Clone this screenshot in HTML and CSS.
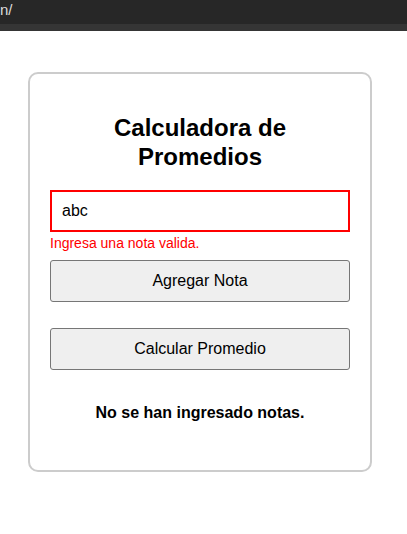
FILE: index.html
```html
<!DOCTYPE html>
<html lang="es">
<head>
<meta charset="utf-8">
<title>Calculadora de Promedios</title>
<link rel="stylesheet" href="styles.css">
</head>
<body>
<div class="topbar"><span class="url">n/</span></div>
<div class="strip"></div>
<main class="card">
  <h2 class="title">Calculadora de Promedios</h2>
  <input class="nota invalid" type="text" value="abc">
  <p class="error">Ingresa una nota valida.</p>
  <button class="btn btn-add">Agregar Nota</button>
  <button class="btn btn-calc">Calcular Promedio</button>
  <p class="result">No se han ingresado notas.</p>
</main>
</body>
</html>
```
FILE: styles.css
```css
html, body {
  margin: 0;
  padding: 0;
  background: #ffffff;
  font-family: "Liberation Sans", Arial, sans-serif;
}
.topbar {
  height: 24px;
  background: #272727;
  overflow: hidden;
}
.url {
  display: block;
  padding-top: 1px;
  color: #dcdcdc;
  font-size: 15px;
  line-height: 18px;
}
.strip {
  height: 7px;
  background: #353535;
}
.card {
  width: 300px;
  margin: 41px 0 0 28px;
  padding: 20px;
  border: 2px solid #cccccc;
  border-radius: 10px;
  display: flex;
  flex-direction: column;
}
.title {
  margin: 19px 0 19px;
  font-size: 24px;
  line-height: 29px;
  font-weight: bold;
  text-align: center;
  color: #000;
}
.nota {
  box-sizing: border-box;
  width: 300px;
  height: 42px;
  margin: 0;
  padding: 0 10px;
  font-family: "Liberation Sans", Arial, sans-serif;
  font-size: 16px;
  color: #000;
  border: 2px solid #cccccc;
  border-radius: 0;
  outline: none;
}
.nota.invalid {
  border-color: #ff0000;
}
.error {
  margin: 3px 0 9px;
  font-size: 14px;
  line-height: 16px;
  color: #ff0000;
}
.btn {
  box-sizing: border-box;
  width: 300px;
  height: 42px;
  margin: 0;
  padding: 0;
  font-family: "Liberation Sans", Arial, sans-serif;
  font-size: 16px;
  color: #000;
  background: #efefef;
  border: 1px solid #767676;
  border-radius: 3px;
}
.btn-add {
  margin-bottom: 26px;
}
.result {
  margin: 34px 0 28px;
  font-size: 16px;
  line-height: 18px;
  font-weight: bold;
  text-align: center;
  color: #000;
}
```
